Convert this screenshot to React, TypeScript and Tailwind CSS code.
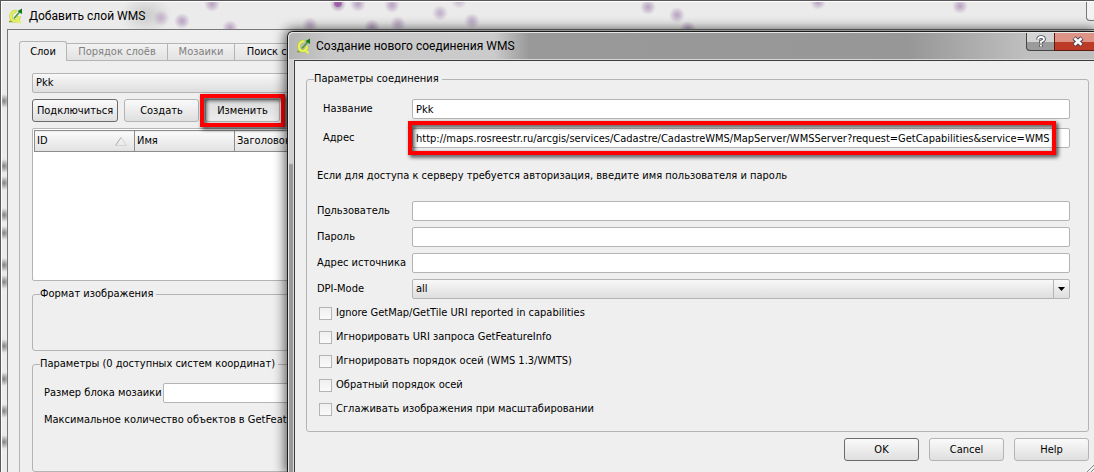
import { useId, useState } from "react";
import type { ReactNode } from "react";
import { clsx } from "clsx";

const SERVICE_URL =
  "http://maps.rosreestr.ru/arcgis/services/Cadastre/CadastreWMS/MapServer/WMSServer?request=GetCapabilities&service=WMS";

const TABS = [
  { label: "Слои", width: "w-12", state: "active" },
  { label: "Порядок слоёв", width: "w-[101px]", state: "disabled" },
  { label: "Мозаики", width: "w-[67px]", state: "disabled" },
  { label: "Поиск сервера", width: "w-[101px]", state: "normal" },
];

const COLUMNS = ["ID", "Имя", "Заголовок"];

const OPTIONS = [
  "Ignore GetMap/GetTile URI reported in capabilities",
  "Игнорировать URI запроса GetFeatureInfo",
  "Игнорировать порядок осей (WMS 1.3/WMTS)",
  "Обратный порядок осей",
  "Сглаживать изображения при масштабировании",
];

// map points that shine through the glass title bar: x, y, opacity
const TITLE_SPOTS = [
  [160, 17, 0.5],
  [181, 20, 0.7],
  [211, 3, 0.7],
  [229, 27, 0.7],
  [309, 24, 0.6],
  [337, 3, 1],
  [357, 3, 0.7],
  [371, 26, 0.7],
  [391, 4, 0.7],
  [397, 23, 0.6],
  [439, 12, 0.6],
  [471, 20, 0.6],
  [458, 0, 0.5],
  [647, 6, 0.7],
  [676, 14, 0.7],
  [687, 28, 0.7],
  [817, 1, 0.7],
  [959, 5, 0.7],
];

const SIDE_SPOTS = [100, 165, 182, 214, 232, 264, 281, 345, 378, 410, 441];

const QgisIcon = () => (
  <svg viewBox="0 0 16 16" className="size-4 shrink-0" aria-hidden="true">
    <path d="M1 13.500h4" stroke="#7fa02a" strokeWidth="1.500" />
    <path
      d="M8.500 3.500C5 2.500 3 5.500 3 8.500s1.500 4.500 4 4.500 4-2 4-5"
      fill="none"
      stroke="#b4c434"
      strokeWidth="3.200"
    />
    <path
      d="M8.500 3.500C5 2.500 3 5.500 3 8.500s1.500 4.500 4 4.500 4-2 4-5M8.500 11l3 3.500h1.500"
      fill="none"
      stroke="#e6f25a"
      strokeWidth="2.200"
    />
    <path d="M6 10.500L12 3.500" stroke="#4f9a32" strokeWidth="1.600" />
    <path d="M9.500 3L14 .5v5.500l-1.800-1z" fill="#167a1c" />
  </svg>
);

const Field = ({
  label,
  indent,
  defaultValue = "",
  type = "text",
}: {
  label: ReactNode;
  indent?: boolean;
  defaultValue?: string;
  type?: string;
}) => {
  const id = useId();

  return (
    <div className="flex items-center">
      <label htmlFor={id} className={clsx("w-[95px] shrink-0 whitespace-nowrap", indent && "pl-1.5")}>
        {label}
      </label>
      <input
        id={id}
        type={type}
        defaultValue={defaultValue}
        className="h-5 min-w-0 flex-1 rounded-[2px] border border-[#b4b4b4] bg-white px-[3px] outline-none"
      />
    </div>
  );
};

const Button = ({
  children,
  className,
  strong,
  pressed,
}: {
  children: ReactNode;
  className?: string;
  strong?: boolean;
  pressed?: boolean;
}) => (
  <button
    type="button"
    className={clsx(
      "h-[23px] rounded-[3px] border bg-linear-to-b whitespace-nowrap",
      strong ? "border-[#6b6b6b]" : "border-[#b4b4b4]",
      pressed ? "from-[#dcdcdc] to-[#ececec]" : "from-[#fafafa] to-[#dfdfdf]",
      className,
    )}
  >
    {children}
  </button>
);

const Group = ({
  title,
  className,
  children,
}: {
  title: string;
  className?: string;
  children?: ReactNode;
}) => (
  <fieldset className={clsx("min-w-0 rounded-[3px] border border-[#b4b4b4]", className)}>
    <legend className="ml-[7px] pr-[3px] leading-[14px]">{title}</legend>
    {children}
  </fieldset>
);

const Highlight = ({ className }: { className: string }) => (
  <div
    className={clsx(
      "pointer-events-none absolute border-4 border-[#fe0000] drop-shadow-[2px_2px_2px_rgba(0,0,0,0.8)]",
      className,
    )}
  />
);

const LayerWindow = () => (
  <section className="absolute inset-0 isolate overflow-hidden border-t border-l border-[#5a5558] bg-[#ebebeb]">
    <svg className="absolute inset-0 size-full" aria-hidden="true">
      <defs>
        <radialGradient id="spot">
          <stop offset="0" stopColor="#a283b0" />
          <stop offset="0.4" stopColor="#a283b0" stopOpacity="0.65" />
          <stop offset="1" stopColor="#a283b0" stopOpacity="0" />
        </radialGradient>
        <radialGradient id="smudge">
          <stop offset="0" stopColor="#777" stopOpacity="0.9" />
          <stop offset="1" stopColor="#777" stopOpacity="0" />
        </radialGradient>
        <radialGradient id="haze">
          <stop offset="0" stopColor="#bdbdbd" stopOpacity="0.7" />
          <stop offset="1" stopColor="#bdbdbd" stopOpacity="0" />
        </radialGradient>
      </defs>
      <ellipse cx="145" cy="14" rx="26" ry="20" fill="url(#haze)" />
      {TITLE_SPOTS.map(([x, y, opacity]) => (
        <circle key={x} cx={x} cy={y} r="8" fill="url(#spot)" opacity={opacity} />
      ))}
      <circle cx="337" cy="2" r="4" fill="#8b2f92" opacity="0.5" />
      {SIDE_SPOTS.map((y) => (
        <ellipse key={y} cx="3" cy={y} rx="6" ry="7" fill="url(#smudge)" />
      ))}
    </svg>
    <div className="relative flex h-full flex-col border-t border-l border-white pl-[5px]">
      <header className="flex h-[27px] shrink-0 items-center gap-[5px] pl-px font-[Roboto,sans-serif] text-[12px]">
        <QgisIcon />
        <h1>Добавить слой WMS</h1>
        <button
          type="button"
          aria-label="Свернуть"
          className="ml-auto h-[19px] w-2 self-start rounded-bl-[4px] border-b border-l border-[#777] bg-[#f3f3f3]"
        />
      </header>
      <div className="flex-1 border-t border-l border-[#777] bg-[#efefef] pt-[11px] pl-[11px]">
        <div role="tablist" className="relative z-10 flex items-end">
          {TABS.map(({ label, width, state }) => (
            <button
              key={label}
              type="button"
              role="tab"
              aria-selected={state === "active"}
              disabled={state === "disabled"}
              className={clsx(
                "border-t border-r border-[#b4b4b4] whitespace-nowrap",
                width,
                state === "active"
                  ? "-mb-px h-5 rounded-t-[3px] border-l bg-[#efefef]"
                  : "h-[17px] bg-linear-to-b from-[#f2f2f2] to-[#e2e2e2]",
                state === "disabled" && "text-[#808080]",
              )}
            >
              {label}
            </button>
          ))}
        </div>
        <div className="flex h-[440px] flex-col border-t border-l border-[#b4b4b4] pt-3 pl-3">
          <select
            aria-label="Соединение"
            className="h-5 shrink-0 appearance-none rounded-[2px] border border-[#b4b4b4] bg-linear-to-b from-[#f8f8f8] to-[#dedede] px-[3px]"
          >
            <option>Pkk</option>
          </select>
          <div className="mt-1.5 flex gap-1.5">
            <Button strong className="w-[86px]">
              Подключиться
            </Button>
            <Button className="w-[75px]">Создать</Button>
            <div className="relative flex">
              <Button pressed className="w-[75px]">
                Изменить
              </Button>
              <Highlight className="-inset-[5px]" />
            </div>
          </div>
          <div className="mt-1.5 h-[153px] shrink-0 rounded-[2px] border border-[#b4b4b4] bg-white pt-px pl-px">
            <table className="w-full table-fixed border-collapse">
              <thead>
                <tr className="h-[21px]">
                  {COLUMNS.map((name, i) => (
                    <th
                      key={name}
                      scope="col"
                      className={clsx(
                        "border border-[#8c8c8c] bg-linear-to-b from-[#fafafa] to-[#e2e2e2] p-0 px-0.5 text-left font-normal",
                        i < 2 && "w-[100px]",
                      )}
                    >
                      <span className="flex items-center justify-between">
                        {name}
                        {i === 0 && (
                          <svg width="14" height="11" className="mr-1" aria-hidden="true">
                            <path d="M1.500 9.500L7 1.500" stroke="#aaa" />
                            <path d="M7 1.500l5.500 8h-11" fill="none" stroke="#d4d4d4" />
                          </svg>
                        )}
                      </span>
                    </th>
                  ))}
                </tr>
              </thead>
            </table>
          </div>
          <Group title="Формат изображения" className="mt-1.5 h-16 shrink-0" />
          <Group title="Параметры (0 доступных систем координат)" className="mt-1.5 h-[115px] shrink-0">
            <div className="mt-3 flex items-center pl-[11px]">
              <label htmlFor="tile-size" className="w-[119px] shrink-0 whitespace-nowrap">
                Размер блока мозаики
              </label>
              <input
                id="tile-size"
                className="h-5 min-w-0 flex-1 rounded-[2px] border border-[#b4b4b4] bg-white px-[3px]"
              />
            </div>
            <p className="mt-[9px] pl-[11px] whitespace-nowrap">Максимальное количество объектов в GetFeatureInfo</p>
          </Group>
        </div>
      </div>
    </div>
  </section>
);

const ConnectionDialog = () => {
  const [mode, setMode] = useState("all");

  return (
    <section
      role="dialog"
      aria-labelledby="connection-title"
      className="absolute inset-y-0 top-[31px] right-0 left-[287px] rounded-tl-[6px] border-t border-l border-[#1c1c1c] bg-[#999] shadow-[0_0_12px_2px_rgba(0,0,0,0.65)]"
    >
      <div className="flex h-full flex-col rounded-tl-[5px] border-t border-l border-[#e6e6e6] bg-linear-to-b from-[#d0d0d0] from-[130px] to-transparent to-[132px]">
        <header className="flex h-[26px] shrink-0 items-center gap-1 rounded-tl-[5px] bg-[linear-gradient(90deg,#b4b4b4_0,#c8c8c8_40px,#cbcbcb_205px,#999_240px,#979797_620px,#c0c0c0_740px)] pl-[7px] font-[Roboto,sans-serif] text-[12px]">
          <QgisIcon />
          <h2 id="connection-title">Создание нового соединения WMS</h2>
          <div className="ml-auto flex self-start">
            <button
              type="button"
              aria-label="Справка"
              className="flex h-[18px] w-7 items-center justify-center rounded-bl-[4px] border-b border-l border-[#444] bg-linear-to-b from-[#d4d4d4] from-50% to-[#9b9b9b] to-50%"
            >
              <svg width="10" height="13" viewBox="0 0 10 13" aria-hidden="true">
                <path d="M2 4.500Q2 2 5 2T8 4.200Q8 5.500 5 6.500V8.500M5 9.800v2" fill="none" stroke="#4a4e5a" strokeWidth="3.600" />
                <path d="M2 4.500Q2 2 5 2T8 4.200Q8 5.500 5 6.500V8.500M5 9.800v1.600" fill="none" stroke="#fff" strokeWidth="1.800" />
              </svg>
            </button>
            <button
              type="button"
              aria-label="Закрыть"
              className="flex h-[18px] w-10 items-center border-b border-l border-[#5a1a12] bg-linear-to-b from-[#dd9487] from-50% to-[#bd3a26] to-50% pl-[17px]"
            >
              <svg width="12" height="11" viewBox="0 0 12 11" aria-hidden="true">
                <path d="M2 2l8 7M10 2l-8 7" stroke="#4d4550" strokeWidth="4.600" />
                <path d="M2.500 2.300l7 6.400M9.500 2.300l-7 6.400" stroke="#fff" strokeWidth="2.600" />
              </svg>
            </button>
          </div>
        </header>
        <div className="ml-1 flex flex-1 flex-col border-t border-l border-[#d8d8d8]">
          <div className="relative flex flex-1 flex-col border-t border-l border-[#3c3c3c] bg-[#efefef] pt-[11px] pr-[5px] pl-[11px]">
            <Group title="Параметры соединения" className="h-[360px]">
              <div className="pr-[18px] pl-2.5">
                <div className="mt-[13px] flex flex-col gap-[9px]">
                  <Field indent label="Название" defaultValue="Pkk" />
                  <div className="relative">
                    <Field indent label="Адрес" defaultValue={SERVICE_URL} />
                    <Highlight className="-top-[7px] right-[14px] -bottom-[7px] left-[91px]" />
                  </div>
                </div>
                <p className="mt-5 leading-4">
                  Если для доступа к серверу требуется авторизация, введите имя пользователя и пароль
                </p>
                <div className="mt-[17px] flex flex-col gap-1.5">
                  <Field
                    label={
                      <>
                        П<u>о</u>льзователь
                      </>
                    }
                  />
                  <Field label="Пароль" type="password" />
                  <Field label="Адрес источника" />
                  <div className="flex items-center">
                    <label htmlFor="dpi-mode" className="w-[95px] shrink-0">
                      DPI-Mode
                    </label>
                    <div className="relative flex flex-1">
                      <select
                        id="dpi-mode"
                        value={mode}
                        onChange={(e) => setMode(e.target.value)}
                        className="h-5 w-full appearance-none rounded-[2px] border border-[#b4b4b4] bg-linear-to-b from-[#f8f8f8] to-[#dedede] px-[3px]"
                      >
                        <option>all</option>
                        <option>off</option>
                        <option>QGIS</option>
                        <option>UMN</option>
                        <option>GeoServer</option>
                      </select>
                      <span className="pointer-events-none absolute inset-y-px right-px flex w-4 items-center justify-center border-l border-[#b4b4b4]">
                        <svg width="7" height="4" aria-hidden="true">
                          <path d="M0 0h7L3.500 4z" />
                        </svg>
                      </span>
                    </div>
                  </div>
                </div>
                <div className="mt-1.5 flex flex-col gap-2">
                  {OPTIONS.map((option) => (
                    <label key={option} className="flex items-center gap-1 self-start pl-0.5 leading-4">
                      <input
                        type="checkbox"
                        className="size-[13px] appearance-none border border-[#b4b4b4] bg-linear-to-b from-[#efefef] to-[#fafafa] checked:bg-[#777]"
                      />
                      {option}
                    </label>
                  ))}
                </div>
              </div>
            </Group>
            <div className="mt-1.5 flex justify-end gap-2.5">
              <Button strong className="w-[75px]">
                OK
              </Button>
              <Button className="w-[75px]">Cancel</Button>
              <Button className="w-[75px]">Help</Button>
            </div>
            <svg width="7" height="7" className="absolute right-0 bottom-0" aria-hidden="true">
              <path d="M0 7l7-7M4 7l3-3" stroke="#888" />
            </svg>
          </div>
        </div>
      </div>
    </section>
  );
};

export default function App() {
  return (
    <main className="relative h-screen w-full overflow-hidden font-[DejaVu_Sans_Condensed,DejaVu_Sans,sans-serif] text-[11px] leading-4 text-black">
      <LayerWindow />
      <ConnectionDialog />
    </main>
  );
}
